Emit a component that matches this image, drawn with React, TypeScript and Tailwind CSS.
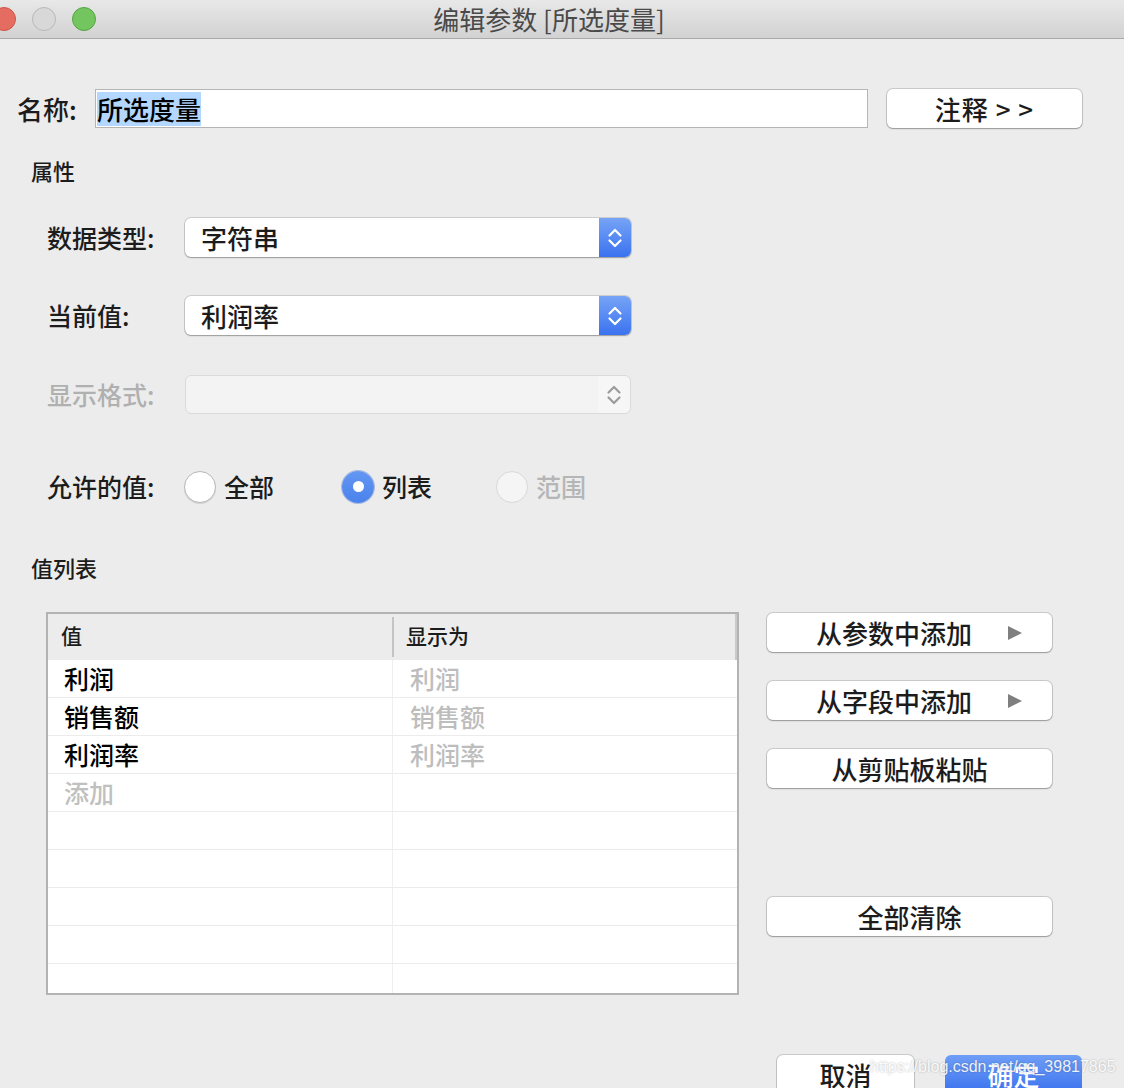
import type { ReactNode } from "react"

const tableRows = [
  { value: "利润", display: "利润" },
  { value: "销售额", display: "销售额" },
  { value: "利润率", display: "利润率" },
  { value: "添加", display: "", placeholder: true },
  { value: "", display: "" },
  { value: "", display: "" },
  { value: "", display: "" },
  { value: "", display: "" },
  { value: "", display: "" },
]

function Chevrons({ color }: { color: string }) {
  return (
    <svg width="16" height="24" viewBox="0 0 16 24" fill="none" stroke={color} strokeWidth="2.2" strokeLinecap="round" strokeLinejoin="round">
      <path d="M2.5 9.5 L8 4 L13.5 9.5" />
      <path d="M2.5 14.5 L8 20 L13.5 14.5" />
    </svg>
  )
}

function Select({ value, disabled }: { value?: string; disabled?: boolean }) {
  if (disabled) {
    return (
      <div className="flex h-[39px] w-[446px] items-center rounded-[6px] border border-[#dadada] bg-[#f3f3f3]">
        <div className="flex-1" />
        <div className="flex h-full w-[32px] items-center justify-center rounded-r-[6px] bg-[#f6f6f6]">
          <Chevrons color="#9b9b9b" />
        </div>
      </div>
    )
  }
  return (
    <div className="flex h-[39px] w-[446px] items-center rounded-[6px] bg-white shadow-[0_0_0_1px_rgba(0,0,0,0.13),0_1px_1.5px_rgba(0,0,0,0.25)]">
      <span className="flex-1 pl-[16px] text-[26px] leading-none font-medium text-[#1c1c1c]">{value}</span>
      <div className="flex h-full w-[32px] items-center justify-center rounded-r-[6px] bg-linear-to-b from-[#77a3f6] to-[#3a72ef]">
        <Chevrons color="#ffffff" />
      </div>
    </div>
  )
}

function Radio({ state }: { state: "off" | "on" | "disabled" }) {
  if (state === "on") {
    return (
      <div className="flex h-[32px] w-[32px] items-center justify-center rounded-full bg-linear-to-b from-[#6397f2] to-[#4a82ec] shadow-[0_0_0_1px_rgba(40,90,200,0.35)]">
        <div className="h-[11px] w-[11px] rounded-full bg-white" />
      </div>
    )
  }
  if (state === "disabled") {
    return <div className="h-[32px] w-[32px] rounded-full border border-[#d9d9d9] bg-[#f5f5f5]" />
  }
  return <div className="h-[32px] w-[32px] rounded-full border border-[#b9b9b9] bg-white shadow-[0_1px_1px_rgba(0,0,0,0.12)]" />
}

function MacButton({
  children,
  arrow,
  width = "w-[285px]",
  className = "",
}: {
  children: ReactNode
  arrow?: boolean
  width?: string
  className?: string
}) {
  return (
    <div
      className={`relative flex h-[39px] shrink-0 items-center justify-center rounded-[6px] bg-white text-[26px] leading-none font-medium text-[#1c1c1c] shadow-[0_0_0_1px_rgba(0,0,0,0.14),0_1px_1.5px_rgba(0,0,0,0.25)] ${width} ${arrow ? "pr-[31px]" : ""} ${className}`}
    >
      {children}
      {arrow && (
        <svg className="absolute right-[29px] top-[12px]" width="16" height="16" viewBox="0 0 16 16">
          <path d="M1 1 L15 8 L1 15 Z" fill="#7f7f7f" />
        </svg>
      )}
    </div>
  )
}

function TitleBar() {
  return (
    <div className="flex h-[39px] items-center border-b border-[#a9a9a9] bg-linear-to-b from-[#e8e8e8] to-[#d2d2d2]">
      <div className="ml-[-8px] flex w-[120px] items-center gap-[16px]">
        <div className="h-[24px] w-[24px] rounded-full border border-[#cf5347] bg-[#e56c60]" />
        <div className="h-[24px] w-[24px] rounded-full border border-[#b8b8b8] bg-[#d8d8d8]" />
        <div className="h-[24px] w-[24px] rounded-full border border-[#56a443] bg-[#72c55f]" />
      </div>
      <div className="flex-1 text-center text-[26px] leading-none text-[#4a4a4a]">编辑参数 [所选度量]</div>
      <div className="w-[138px]" />
    </div>
  )
}

export default function App() {
  return (
    <div className="relative h-[1088px] w-[1124px] overflow-hidden bg-[#ececec] font-['Noto_Sans_CJK_SC',sans-serif] text-[#1c1c1c]">
      <TitleBar />

      <div className="flex flex-col">
        {/* name */}
        <div className="mt-[50px] flex h-[39px] items-center">
          <span className="ml-[17px] w-[78px] shrink-0 text-[26px] leading-none font-medium">名称:</span>
          <div className="flex h-[39px] w-[773px] shrink-0 items-center border border-[#b5b5b5] bg-white pl-[1px]">
            <span className="flex h-[34px] items-center bg-[#b3d7ff] text-[26px] leading-none font-medium text-black">所选度量</span>
          </div>
          <MacButton width="w-[195px]" className="ml-[19px] tracking-[1px]">
            注释 &gt; &gt;
          </MacButton>
        </div>

        <div className="mt-[29px] ml-[31px] text-[22px] leading-[26px] font-medium">属性</div>

        <div className="mt-[35px] flex items-center">
          <span className="ml-[47px] w-[138px] text-[25px] leading-none font-medium">数据类型:</span>
          <Select value="字符串" />
        </div>
        <div className="mt-[39px] flex items-center">
          <span className="ml-[47px] w-[138px] text-[25px] leading-none font-medium">当前值:</span>
          <Select value="利润率" />
        </div>
        <div className="mt-[40px] flex items-center">
          <span className="ml-[47px] w-[138px] text-[25px] leading-none font-medium text-[#b0b0b0]">显示格式:</span>
          <Select disabled />
        </div>

        {/* allowed values */}
        <div className="mt-[53px] flex h-[39px] items-center">
          <span className="ml-[47px] w-[137px] text-[25px] leading-none font-medium">允许的值:</span>
          <div className="flex w-[158px] items-center gap-[8px]">
            <Radio state="off" />
            <span className="text-[25px] leading-none font-medium">全部</span>
          </div>
          <div className="flex w-[154px] items-center gap-[8px]">
            <Radio state="on" />
            <span className="text-[25px] leading-none font-medium">列表</span>
          </div>
          <div className="flex items-center gap-[8px]">
            <Radio state="disabled" />
            <span className="text-[25px] leading-none font-medium text-[#b5b5b5]">范围</span>
          </div>
        </div>

        <div className="mt-[48px] ml-[31px] text-[22px] leading-[26px] font-medium">值列表</div>

        {/* value list + side buttons */}
        <div className="mt-[32px] ml-[46px] flex items-start">
          <div className="w-[693px] border-2 border-[#b3b3b3] bg-white">
            <div className="flex h-[46px] bg-[#ececec]">
              <div className="flex w-[344px] items-center pb-[3px] pl-[13px] text-[21px] leading-none font-medium">值</div>
              <div className="my-[3px] w-[2px] bg-[#c4c4c4]" />
              <div className="flex flex-1 items-center pb-[3px] pl-[12px] text-[21px] leading-none font-medium">显示为</div>
              <div className="w-[2px] bg-[#c9c9c9]" />
            </div>
            <div className="h-[333px] overflow-hidden">
              {tableRows.map((row, i) => (
                <div key={i} className="flex h-[38px] border-b border-[#ececec]">
                  <div
                    className={`flex w-[345px] items-center border-r border-[#efefef] pl-[16px] text-[25px] leading-none font-medium ${row.placeholder ? "text-[#c0c0c0]" : "text-black"}`}
                  >
                    {row.value}
                  </div>
                  <div className="flex flex-1 items-center pl-[17px] text-[25px] leading-none font-medium text-[#bdbdbd]">
                    {row.display}
                  </div>
                </div>
              ))}
            </div>
          </div>

          <div className="ml-[28px] mt-[1px] flex flex-col">
            <MacButton arrow>从参数中添加</MacButton>
            <MacButton arrow className="mt-[29px]">从字段中添加</MacButton>
            <MacButton className="mt-[29px]">从剪贴板粘贴</MacButton>
            <MacButton className="mt-[109px]">全部清除</MacButton>
          </div>
        </div>

        {/* footer */}
        <div className="mt-[60px] ml-[777px] flex gap-[31px]">
          <div className="flex h-[39px] w-[137px] items-center justify-center rounded-[6px] bg-white text-[26px] leading-none font-medium shadow-[0_0_0_1px_rgba(0,0,0,0.14),0_1px_1.5px_rgba(0,0,0,0.25)]">
            取消
          </div>
          <div className="flex h-[39px] w-[137px] items-center justify-center rounded-[6px] bg-linear-to-b from-[#6f9ef6] to-[#3a71ee] text-[26px] leading-none font-medium text-white">
            确定
          </div>
        </div>
      </div>

      <div className="absolute left-[870px] top-[1059px] font-['Liberation_Sans',sans-serif] text-[16px] leading-none text-white/90 [text-shadow:0_0_2px_rgba(0,0,0,0.3)]">
        https://blog.csdn.net/qq_39817865
      </div>
    </div>
  )
}
